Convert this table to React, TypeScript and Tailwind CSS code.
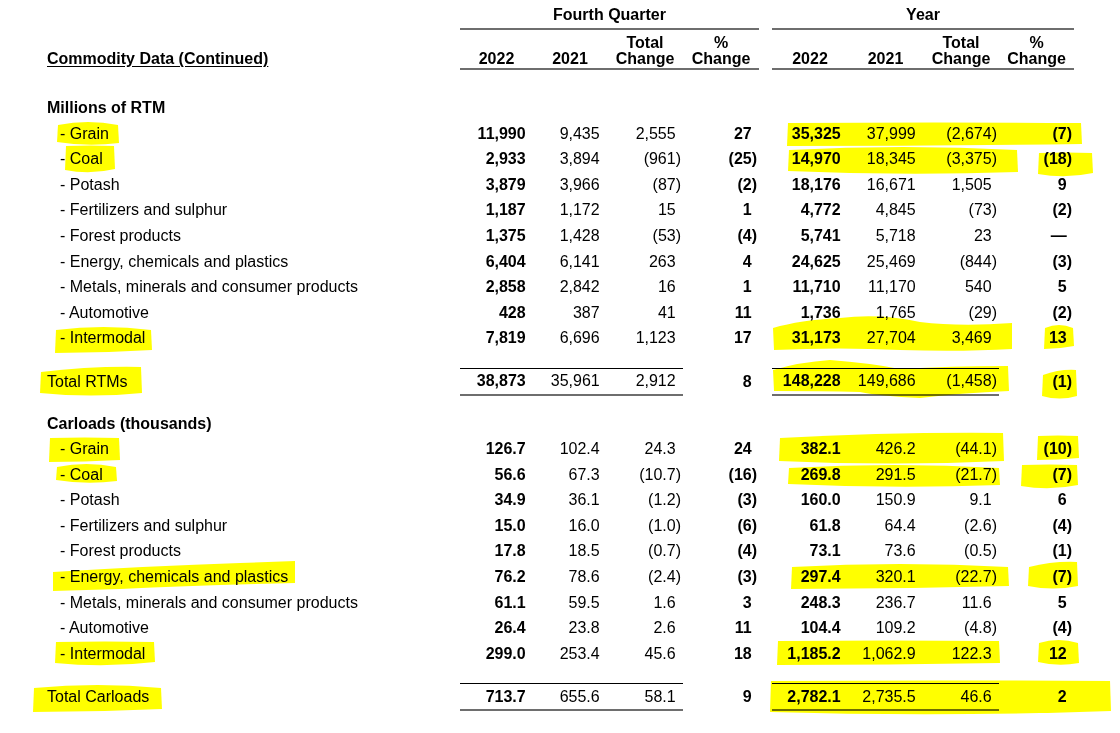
import React from "react"

type Line = [string, string, string, string, string, string, string, string, string]

const rtmRows: Line[] = [
  ["Grain", "11,990", "9,435", "2,555", "27", "35,325", "37,999", "(2,674)", "(7)"],
  ["Coal", "2,933", "3,894", "(961)", "(25)", "14,970", "18,345", "(3,375)", "(18)"],
  ["Potash", "3,879", "3,966", "(87)", "(2)", "18,176", "16,671", "1,505", "9"],
  ["Fertilizers and sulphur", "1,187", "1,172", "15", "1", "4,772", "4,845", "(73)", "(2)"],
  ["Forest products", "1,375", "1,428", "(53)", "(4)", "5,741", "5,718", "23", "—"],
  ["Energy, chemicals and plastics", "6,404", "6,141", "263", "4", "24,625", "25,469", "(844)", "(3)"],
  ["Metals, minerals and consumer products", "2,858", "2,842", "16", "1", "11,710", "11,170", "540", "5"],
  ["Automotive", "428", "387", "41", "11", "1,736", "1,765", "(29)", "(2)"],
  ["Intermodal", "7,819", "6,696", "1,123", "17", "31,173", "27,704", "3,469", "13"],
]
const rtmTotal: Line = ["Total RTMs", "38,873", "35,961", "2,912", "8", "148,228", "149,686", "(1,458)", "(1)"]

const carloadRows: Line[] = [
  ["Grain", "126.7", "102.4", "24.3", "24", "382.1", "426.2", "(44.1)", "(10)"],
  ["Coal", "56.6", "67.3", "(10.7)", "(16)", "269.8", "291.5", "(21.7)", "(7)"],
  ["Potash", "34.9", "36.1", "(1.2)", "(3)", "160.0", "150.9", "9.1", "6"],
  ["Fertilizers and sulphur", "15.0", "16.0", "(1.0)", "(6)", "61.8", "64.4", "(2.6)", "(4)"],
  ["Forest products", "17.8", "18.5", "(0.7)", "(4)", "73.1", "73.6", "(0.5)", "(1)"],
  ["Energy, chemicals and plastics", "76.2", "78.6", "(2.4)", "(3)", "297.4", "320.1", "(22.7)", "(7)"],
  ["Metals, minerals and consumer products", "61.1", "59.5", "1.6", "3", "248.3", "236.7", "11.6", "5"],
  ["Automotive", "26.4", "23.8", "2.6", "11", "104.4", "109.2", "(4.8)", "(4)"],
  ["Intermodal", "299.0", "253.4", "45.6", "18", "1,185.2", "1,062.9", "122.3", "12"],
]
const carloadTotal: Line = ["Total Carloads", "713.7", "655.6", "58.1", "9", "2,782.1", "2,735.5", "46.6", "2"]

// same column template for every row so the figures line up
const cols = "grid grid-cols-[460px_73px_74px_76px_76px_13px_76px_75px_76px_75px]"

// bold columns: current-year figures and % change
const boldCol = [true, false, false, true]

// highlighter strokes: x, y, w, h
const marks: [number, number, number, number][] = [
  [58, 122, 60, 23],
  [66, 146, 48, 25],
  [56, 328, 95, 24],
  [41, 368, 100, 27],
  [788, 122, 293, 24],
  [789, 147, 228, 27],
  [1039, 153, 53, 22],
  [1045, 326, 28, 22],
  [1043, 371, 33, 27],
  [50, 437, 69, 25],
  [57, 464, 59, 19],
  [56, 642, 98, 22],
  [34, 686, 127, 25],
  [780, 434, 223, 29],
  [1038, 435, 40, 25],
  [789, 465, 210, 22],
  [1022, 465, 55, 22],
  [792, 565, 216, 23],
  [1029, 563, 48, 25],
  [778, 640, 221, 25],
  [1039, 640, 39, 25],
  [771, 681, 339, 32],
]

// the odd-shaped ones, drawn by hand
const freeMarks = [
  "M773,328 Q800,320 840,318 Q880,313 920,322 Q960,327 1012,323 L1012,349 Q960,352 900,350 Q840,347 774,350 Z",
  "M773,370 Q800,362 830,360 Q870,363 900,369 Q950,366 1008,366 L1009,391 Q960,393 920,398 Q880,396 860,392 Q820,391 774,391 Z",
  "M53,572 Q150,566 240,563 L295,561 L295,583 Q200,585 120,589 L53,591 Z",
]

function stroke([x, y, w, h]: [number, number, number, number], i: number) {
  const j = (n: number) => ((i * 7 + n * 3) % 5) - 2
  return `M${x},${y + 2 + j(1)} Q${x + w / 2},${y - 2 + j(2)} ${x + w},${y + 1 + j(3)} L${x + w + 1},${y + h - 2} Q${x + w / 2},${y + h + 2 + j(4)} ${x - 1},${y + h - 1 + j(5)} Z`
}

function Num({ v, bold, border }: { v: string; bold: boolean; border?: boolean }) {
  return (
    <div
      className={
        "flex items-center justify-end pr-[2px] whitespace-nowrap " +
        (bold ? "font-bold " : "") +
        (border ? "border-t border-black border-b-2 border-b-[#6e6e6e]" : "")
      }
    >
      {v}
      {!v.endsWith(")") && <span className="invisible">)</span>}
    </div>
  )
}

function DataRow({ row }: { row: Line }) {
  const [label, ...vals] = row
  return (
    <div className={`${cols} h-[25.6px] items-stretch`}>
      <div className="flex items-center pl-[60px]">- {label}</div>
      {vals.slice(0, 4).map((v, i) => (
        <Num key={i} v={v} bold={boldCol[i]} />
      ))}
      <div />
      {vals.slice(4).map((v, i) => (
        <Num key={i} v={v} bold={boldCol[i]} />
      ))}
    </div>
  )
}

function TotalRow({ row }: { row: Line }) {
  const [label, ...vals] = row
  return (
    <div className={`${cols} h-[28px] items-stretch mt-[16.4px]`}>
      <div className="flex items-center pl-[47px]">{label}</div>
      {vals.slice(0, 4).map((v, i) => (
        <Num key={i} v={v} bold={boldCol[i]} border={i < 3} />
      ))}
      <div />
      {vals.slice(4).map((v, i) => (
        <Num key={i} v={v} bold={boldCol[i]} border={i < 3} />
      ))}
    </div>
  )
}

function HeadCell({ lines }: { lines: string[] }) {
  return (
    <div className="flex flex-col justify-end items-center pb-[1px] border-b-2 border-[#6e6e6e] leading-4 font-bold">
      {lines.map((l) => (
        <span key={l}>{l}</span>
      ))}
    </div>
  )
}

export default function App() {
  const heads = [["2022"], ["2021"], ["Total", "Change"], ["%", "Change"]]

  return (
    <div className="relative w-[1120px] h-[733px] bg-white text-black text-[16px] font-['Liberation_Sans',Arial,sans-serif] overflow-hidden">
      <div className={`${cols} pt-[5px]`}>
        <div />
        <div className="col-span-4 text-center font-bold leading-5 pb-[3px] border-b-2 border-[#6e6e6e]">Fourth Quarter</div>
        <div />
        <div className="col-span-4 text-center font-bold leading-5 pb-[3px] border-b-2 border-[#6e6e6e]">Year</div>
      </div>
      <div className={`${cols} pt-[5px]`}>
        <div className="flex items-end pl-[47px] pb-[3px] leading-4 font-bold">
          <span className="underline underline-offset-2">Commodity Data (Continued)</span>
        </div>
        {heads.map((h, i) => (
          <HeadCell key={i} lines={h} />
        ))}
        <div />
        {heads.map((h, i) => (
          <HeadCell key={i} lines={h} />
        ))}
      </div>

      <div className="mt-[25.2px] h-[25.6px] flex items-center pl-[47px] font-bold">Millions of RTM</div>
      {rtmRows.map((r) => (
        <DataRow key={r[0]} row={r} />
      ))}
      <TotalRow row={rtmTotal} />

      <div className="mt-[15.2px] h-[25.6px] flex items-center pl-[47px] font-bold">Carloads (thousands)</div>
      {carloadRows.map((r) => (
        <DataRow key={r[0]} row={r} />
      ))}
      <TotalRow row={carloadTotal} />

      <svg className="absolute inset-0 pointer-events-none mix-blend-multiply" width="1120" height="733">
        {marks.map((m, i) => (
          <path key={i} d={stroke(m, i)} fill="#ffff00" />
        ))}
        {freeMarks.map((d, i) => (
          <path key={"f" + i} d={d} fill="#ffff00" />
        ))}
      </svg>
    </div>
  )
}
